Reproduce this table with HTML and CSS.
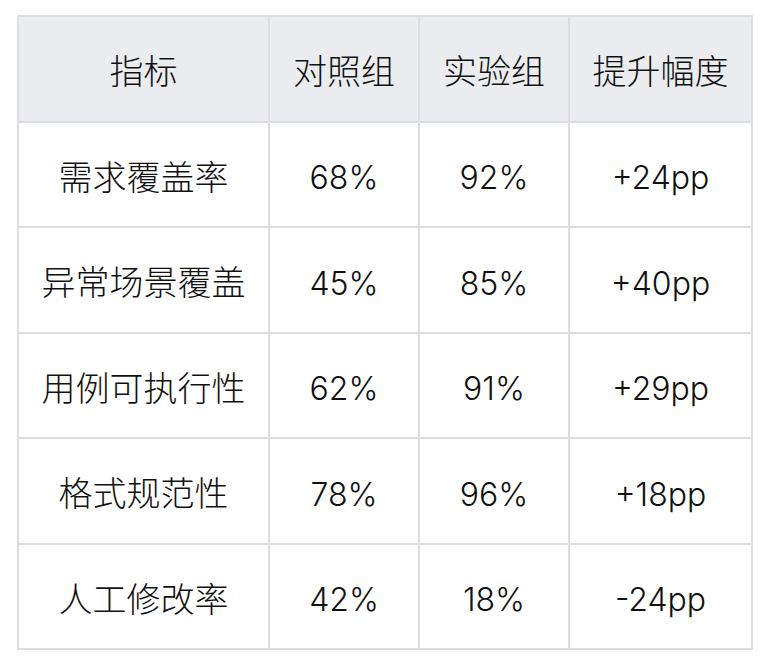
FILE: index.html
```html
<!DOCTYPE html>
<html lang="zh">
<head>
<meta charset="utf-8">
<link rel="stylesheet" href="styles.css">
</head>
<body>
<table class="metrics">
  <colgroup>
    <col class="c1"><col class="c2"><col class="c3"><col class="c4">
  </colgroup>
  <thead>
    <tr><th>指标</th><th>对照组</th><th>实验组</th><th>提升幅度</th></tr>
  </thead>
  <tbody>
    <tr><td class="label">需求覆盖率</td><td>68%</td><td>92%</td><td>+24pp</td></tr>
    <tr><td class="label">异常场景覆盖</td><td>45%</td><td>85%</td><td>+40pp</td></tr>
    <tr><td class="label">用例可执行性</td><td>62%</td><td>91%</td><td>+29pp</td></tr>
    <tr><td class="label">格式规范性</td><td>78%</td><td>96%</td><td>+18pp</td></tr>
    <tr><td class="label">人工修改率</td><td>42%</td><td>18%</td><td>-24pp</td></tr>
  </tbody>
</table>
</body>
</html>
```
FILE: styles.css
```css
html, body {
  margin: 0;
  padding: 0;
  background: #ffffff;
}
body {
  padding: 15px 0 0 17px;
  font-family: Inter, "Noto Sans CJK SC", sans-serif;
  color: #111111;
}
.metrics {
  border-collapse: collapse;
  table-layout: fixed;
  width: 734px;
}
.c1 { width: 251px; }
.c2 { width: 150px; }
.c3 { width: 150px; }
.c4 { width: 183px; }
.metrics th,
.metrics td {
  border: 2px solid #dcdce2;
  height: 105.5px;
  padding: 8px 0 0 0;
  box-sizing: border-box;
  text-align: center;
  vertical-align: middle;
  font-size: 32px;
  font-weight: 300;
  line-height: 1.2;
}
.metrics th,
.metrics td.label {
  font-size: 34px;
}
.metrics th {
  background: #ebecf0;
}
```
